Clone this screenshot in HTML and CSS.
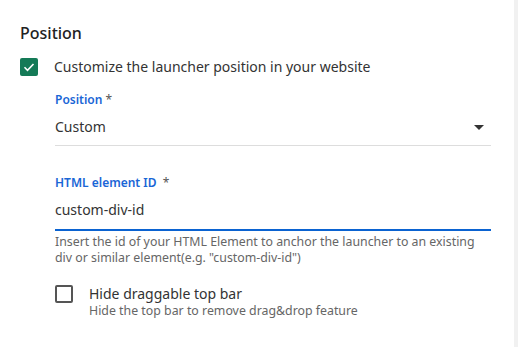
FILE: index.html
```html
<!DOCTYPE html>
<html lang="en">
<head>
<meta charset="utf-8">
<title>Position</title>
<link rel="stylesheet" href="styles.css">
</head>
<body>
<div class="page">
  <main class="panel">
    <h2 class="title">Position</h2>
    <label class="check-row">
      <span class="box checked">
        <svg viewBox="0 0 18 18" width="18" height="18"><path d="M4.5 9.3l3 3 6-6.3" fill="none" stroke="#fff" stroke-width="1.6"/></svg>
      </span>
      <span class="check-label">Customize the launcher position in your website</span>
    </label>
    <div class="fields">
      <div class="field select">
        <div class="field-label"><span class="lab">Position</span> <span class="req">*</span></div>
        <div class="field-value">
          <span>Custom</span>
          <svg class="caret" viewBox="0 0 10 5" width="10" height="5"><path d="M0 0h10L5 5z" fill="#333"/></svg>
        </div>
      </div>
      <div class="field text focused">
        <div class="field-label"><span class="lab">HTML element ID</span>&nbsp; <span class="req">*</span></div>
        <div class="field-value"><span>custom-div-id</span></div>
      </div>
      <p class="helper">Insert the id of your HTML Element to anchor the launcher to an existing div or similar element(e.g. "custom-div-id")</p>
      <label class="check-row sub">
        <span class="box"></span>
        <span class="check-text">
          <span class="check-label">Hide draggable top bar</span>
          <span class="check-hint">Hide the top bar to remove drag&amp;drop feature</span>
        </span>
      </label>
    </div>
  </main>
  <div class="scrollbar"></div>
</div>
</body>
</html>
```
FILE: styles.css
```css
* { box-sizing: border-box; }
html, body { margin: 0; padding: 0; background: #fff; }
body { font-family: "Noto Sans", "Open Sans", sans-serif; color: #333; }
.page { display: flex; width: 518px; height: 347px; overflow: hidden; }
.panel { flex: 1; padding: 21px 0 0 20px; }
.scrollbar { width: 4px; background: #f1f1f1; }
.title { margin: 0; font-size: 16px; font-weight: 500; line-height: 24px; color: #222; }
.check-row { display: flex; align-items: flex-start; gap: 16px; margin-top: 13px; }
.box { width: 18px; height: 18px; border: 2px solid #555; border-radius: 2px; flex: none; display: flex; align-items: center; justify-content: center; }
.box.checked { background: #147a57; border: none; }
.box.checked svg { display: block; }
.check-label { font-size: 14px; line-height: 18px; color: #333; }
.fields { padding-left: 35px; width: 471px; }
.field { border-bottom: 1px solid #ddd; }
.field-label { font-size: 12px; line-height: 16px; }
.lab { color: #1a66d6; font-weight: 600; }
.req { color: #555; }
.select { margin-top: 16px; }
.select .field-value { display: flex; align-items: center; justify-content: space-between; padding: 9px 7px 8px 0; font-size: 14px; line-height: 20px; }
.caret { display: block; }
.text { margin-top: 29px; }
.text .field-value { padding: 9px 0 9px; font-size: 14px; line-height: 20px; }
.focused { border-bottom: 2px solid #0b63d1; }
.helper { margin: 3px 0 0; font-size: 12.35px; line-height: 16px; color: #666; }
.check-row.sub { margin-top: 19px; }
.check-text { display: flex; flex-direction: column; }
.check-hint { font-size: 12.35px; line-height: 16px; color: #666; }
```
